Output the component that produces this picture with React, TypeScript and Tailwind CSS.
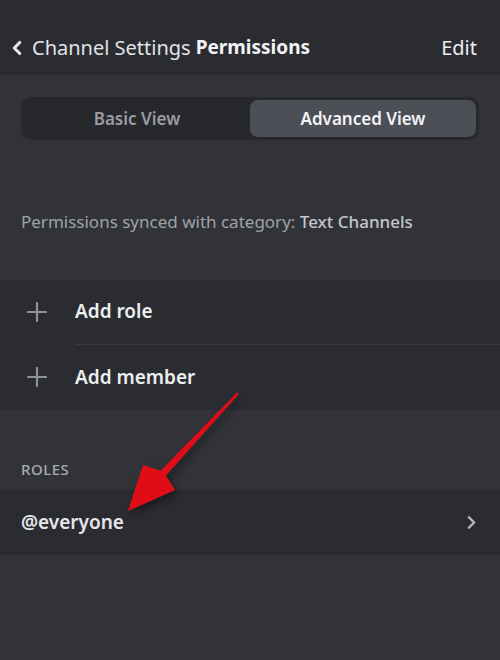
import { ChevronLeft, ChevronRight } from "lucide-react";

const font = { fontFamily: '"Noto Sans", "Open Sans", sans-serif' };

function PlusIcon() {
  return (
    <svg width="20" height="20" viewBox="0 0 20 20" className="text-[#8e9198]">
      <path d="M10 1v18M1 10h18" stroke="currentColor" strokeWidth="2.2" strokeLinecap="round" />
    </svg>
  );
}

function AddRow({ label, divider }: { label: string; divider?: boolean }) {
  return (
    <div className="flex h-[65px] items-center">
      <div className="flex w-[75px] shrink-0 items-center pl-[27px]">
        <PlusIcon />
      </div>
      <div
        className={
          divider
            ? "flex h-full flex-1 items-center border-b border-[#3a3b40]"
            : "flex h-full flex-1 items-center"
        }
      >
        <span className="text-[19px] font-semibold text-[#eceef0]">{label}</span>
      </div>
    </div>
  );
}

export default function App() {
  return (
    <div className="relative h-[660px] w-[500px] overflow-hidden bg-[#313338]" style={font}>
      <header className="flex h-[75px] items-center justify-between bg-[#2b2c31] pt-[20px] pl-[6px] pr-[23px]">
        <div className="flex items-center">
          <ChevronLeft className="h-[22px] w-[22px] text-[#e6e7e9]" strokeWidth={3.4} />
          <span className="ml-[4px] text-[20px] text-[#e2e3e5]">Channel Settings</span>
          <span className="ml-[5px] text-[19px] font-bold text-[#f2f3f5]">Permissions</span>
        </div>
        <span className="text-[20px] text-[#eceef0]">Edit</span>
      </header>

      <div className="px-[21px] pt-[22px]">
        <div className="flex h-[43px] rounded-[10px] bg-[#27282c] p-[3px]">
          <div className="flex flex-1 items-center justify-center text-[17px] font-semibold text-[#9a9ca2]">
            Basic View
          </div>
          <div className="flex flex-1 items-center justify-center rounded-[8px] bg-[#4d4f56] text-[17px] font-semibold text-[#f2f3f5]">
            Advanced View
          </div>
        </div>
      </div>

      <p className="mt-[69px] px-[21px] text-[17px] text-[#9fa2a8]">
        Permissions synced with category:{" "}
        <span className="font-medium text-[#c4c7cc]">Text Channels</span>
      </p>

      <section className="mt-[45px] bg-[#2b2c31]">
        <AddRow label="Add role" divider />
        <AddRow label="Add member" />
      </section>

      <div className="px-[21px] pt-[48px] pb-[10px] text-[15px] font-medium tracking-[0.5px] text-[#a8abb1]">
        ROLES
      </div>

      <div className="flex h-[65px] items-center justify-between bg-[#2b2c31] pl-[21px] pr-[18px]">
        <span className="text-[19px] font-semibold text-[#e6e7e9]">@everyone</span>
        <ChevronRight className="h-[21px] w-[21px] text-[#b5b8bd]" strokeWidth={2.8} />
      </div>

      <svg
        className="pointer-events-none absolute left-0 top-0"
        width="500"
        height="660"
        viewBox="0 0 500 660"
      >
        <defs>
          <filter id="sh" x="-20%" y="-20%" width="140%" height="140%">
            <feDropShadow dx="3" dy="4" stdDeviation="4" floodColor="#000" floodOpacity="0.45" />
          </filter>
        </defs>
        <polygon
          points="237.3,392.3 238.9,393.9 165.8,475.6 175,490 128,511 143,465 160.6,470.8"
          fill="#e01018"
          filter="url(#sh)"
        />
      </svg>
    </div>
  );
}
